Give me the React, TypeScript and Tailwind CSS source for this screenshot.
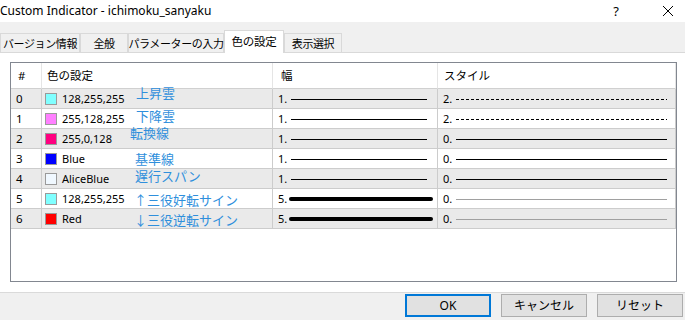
import React from "react";

const rows = [
  { color: "#80ffff", name: "128,255,255", width: 1, style: 2, faint: false },
  { color: "#ff80ff", name: "255,128,255", width: 1, style: 2, faint: false },
  { color: "#ff0080", name: "255,0,128", width: 1, style: 0, faint: false },
  { color: "#0000ff", name: "Blue", width: 1, style: 0, faint: false },
  { color: "#f0f8ff", name: "AliceBlue", width: 1, style: 0, faint: false },
  { color: "#80ffff", name: "128,255,255", width: 5, style: 0, faint: true },
  { color: "#ff0000", name: "Red", width: 5, style: 0, faint: true },
];

// blue notes written over the list (x, vertical centre)
const notes = [
  { text: "上昇雲", x: 136, y: 94 },
  { text: "下降雲", x: 136, y: 117 },
  { text: "転換線", x: 130, y: 134 },
  { text: "基準線", x: 135, y: 160 },
  { text: "遅行スパン", x: 135, y: 177 },
  { text: "↑三役好転サイン", x: 134, y: 201 },
  { text: "↓三役逆転サイン", x: 134, y: 221 },
];

const tabs = ["バージョン情報", "全般", "パラメーターの入力", "色の設定", "表示選択"];
const tabWidths = ["w-[80px]", "w-[48px]", "w-[96px]", "w-[60px]", "w-[58px]"];

function WidthLine({ width }: { width: number }) {
  if (width >= 5) {
    return (
      <svg width="144" height="6" className="ml-[1px]">
        <line x1="2" y1="3" x2="142" y2="3" stroke="#000" strokeWidth="4" strokeLinecap="round" />
      </svg>
    );
  }
  return (
    <svg width="138" height="6" className="ml-[3px]">
      <line x1="0" y1="3.5" x2="136" y2="3.5" stroke="#000" strokeWidth="1" />
    </svg>
  );
}

function StyleLine({ style, faint }: { style: number; faint: boolean }) {
  return (
    <svg width="212" height="6" className="ml-[3px]">
      <line
        x1="0"
        y1="3.5"
        x2="211"
        y2="3.5"
        stroke={faint ? "#a0a0a0" : "#000"}
        strokeWidth="1"
        strokeDasharray={style === 2 ? "3 2" : undefined}
      />
    </svg>
  );
}

export default function App() {
  return (
    <div
      className="relative w-[685px] h-[320px] overflow-hidden bg-white text-[12px] text-black"
      style={{ fontFamily: '"Noto Sans", "Noto Sans CJK JP", sans-serif' }}
    >
      {/* title bar */}
      <div className="h-[22px] flex items-center">
        <span className="leading-none">Custom Indicator - ichimoku_sanyaku</span>
        <span className="ml-auto mr-[43px] text-[13px] leading-none">?</span>
        <svg width="12" height="12" className="mr-[11px]">
          <path d="M1 1 L11 11 M11 1 L1 11" stroke="#000" strokeWidth="1" />
        </svg>
      </div>

      {/* tab strip */}
      <div className="h-[31px] bg-[#f0f0f0] border-b border-[#d9d9d9] flex items-end">
        {tabs.map((t, i) =>
          i === 3 ? (
            <div
              key={t}
              className={`${tabWidths[i]} h-[23px] -mb-px bg-white border border-b-0 border-[#d9d9d9] flex items-center justify-center leading-none whitespace-nowrap text-[11.5px] tracking-[-0.3px] relative z-10`}
            >
              {t}
            </div>
          ) : (
            <div
              key={t}
              className={`${tabWidths[i]} h-[19px] border border-b-0 border-[#d9d9d9] flex items-center justify-center leading-none whitespace-nowrap text-[11px] tracking-[-0.4px]`}
            >
              {t}
            </div>
          )
        )}
      </div>

      {/* content */}
      <div className="h-[239px] pt-[9px] pl-[10px]">
        <div className="w-[667px] h-[220px] border border-[#828790] bg-white text-[11.5px]">
          <div className="grid grid-cols-[31px_231px_165px_238px]">
            <div className="h-[26px] border-b border-r border-[#d0d0d0] border-r-[#e5e5e5] flex items-center pl-[7px]">#</div>
            <div className="h-[26px] border-b border-r border-[#d0d0d0] border-r-[#e5e5e5] flex items-center pl-[5px]">色の設定</div>
            <div className="h-[26px] border-b border-r border-[#d0d0d0] border-r-[#e5e5e5] flex items-center pl-[8px]">幅</div>
            <div className="h-[26px] border-b border-r border-[#d0d0d0] border-r-[#e5e5e5] flex items-center pl-[6px]">スタイル</div>
            {rows.map((r, i) => {
              const bg = i % 2 === 0 ? "bg-[#eaeaea]" : "bg-white";
              return (
                <React.Fragment key={i}>
                  <div className={`${bg} h-[20px] border-b border-r border-[#cccccc] flex items-center pl-[5px]`}>{i}</div>
                  <div className={`${bg} h-[20px] border-b border-r border-[#cccccc] flex items-center pl-[3px]`}>
                    <span
                      className="w-[12px] h-[12px] border border-[#9a9a9a] mr-[5px]"
                      style={{ background: r.color }}
                    />
                    <span className="leading-none text-[11px]">{r.name}</span>
                  </div>
                  <div className={`${bg} h-[20px] border-b border-r border-[#cccccc] flex items-center pl-[5px]`}>
                    <span className="leading-none w-[10px] text-[11px]">{r.width}.</span>
                    <WidthLine width={r.width} />
                  </div>
                  <div className={`${bg} h-[20px] border-b border-r border-[#cccccc] flex items-center pl-[5px]`}>
                    <span className="leading-none w-[10px] text-[11px]">{r.style}.</span>
                    <StyleLine style={r.style} faint={r.faint} />
                  </div>
                </React.Fragment>
              );
            })}
          </div>
        </div>
      </div>

      {/* footer */}
      <div className="h-[28px] bg-[#f0f0f0] border-t border-[#dadada] flex items-start justify-end pt-[1px] pr-[2px] gap-[10px]">
        <button className="w-[86px] h-[23px] bg-[#e1e1e1] border-2 border-[#0078d7] text-[12px] leading-none">OK</button>
        <button className="w-[86px] h-[23px] bg-[#e1e1e1] border border-[#adadad] text-[12px] leading-none">キャンセル</button>
        <button className="w-[86px] h-[23px] bg-[#e1e1e1] border border-[#adadad] text-[12px] leading-none">リセット</button>
      </div>

      {/* annotations */}
      {notes.map((n) => (
        <span
          key={n.text}
          className="absolute text-[13px] leading-[13px] text-[#2f8fdc] whitespace-nowrap"
          style={{ left: n.x, top: n.y - 7 }}
        >
          {n.text}
        </span>
      ))}
    </div>
  );
}
